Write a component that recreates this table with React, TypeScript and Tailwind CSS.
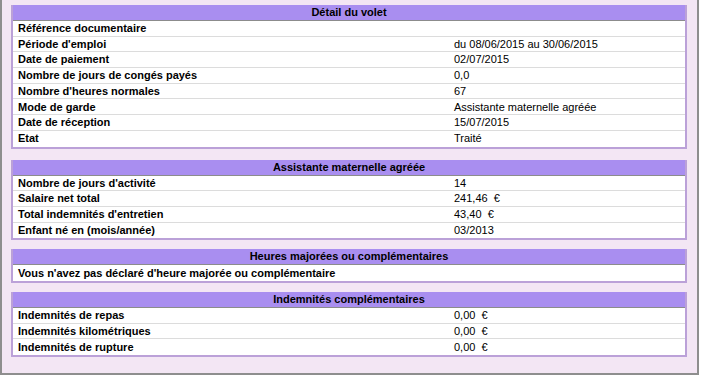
const font = { fontFamily: '"Liberation Sans", Arial, sans-serif' };

type Row = [string, string];

const volet: Row[] = [
  ["Référence documentaire", ""],
  ["Période d'emploi", "du 08/06/2015 au 30/06/2015"],
  ["Date de paiement", "02/07/2015"],
  ["Nombre de jours de congés payés", "0,0"],
  ["Nombre d'heures normales", "67"],
  ["Mode de garde", "Assistante maternelle agréée"],
  ["Date de réception", "15/07/2015"],
  ["Etat", "Traité"],
];

const assistante: Row[] = [
  ["Nombre de jours d'activité", "14"],
  ["Salaire net total", "241,46\u00a0 €"],
  ["Total indemnités d'entretien", "43,40\u00a0 €"],
  ["Enfant né en (mois/année)", "03/2013"],
];

const indemnites: Row[] = [
  ["Indemnités de repas", "0,00\u00a0 €"],
  ["Indemnités kilométriques", "0,00\u00a0 €"],
  ["Indemnités de rupture", "0,00\u00a0 €"],
];

function Panel({ title, children }: { title: string; children: React.ReactNode }) {
  return (
    <div className="border-2 border-t-0 border-[#bba1d8] bg-white">
      <div className="h-[16px] bg-[#a98ef0] border-b border-[#8c8c8c] text-center text-[11px] leading-[15px] font-bold text-black">
        {title}
      </div>
      {children}
    </div>
  );
}

function Rows({ rows }: { rows: Row[] }) {
  return (
    <div>
      {rows.map(([label, value], i) => (
        <div
          key={label}
          className={`flex h-[15.7px] items-center text-[11px] text-black ${
            i < rows.length - 1 ? "border-b border-[#dcdcdc]" : ""
          }`}
        >
          <div className="w-[441px] pl-[5px] font-bold">{label}</div>
          <div className="flex-1">{value}</div>
        </div>
      ))}
    </div>
  );
}

export default function App() {
  return (
    <div className="w-[701px] h-[375px] bg-white" style={font}>
      <div className="w-[699px] h-[375px] bg-[#f3e6f4] border-l-2 border-r-2 border-b-2 border-[#8e8e8e] pt-[5px] pl-[9px] pr-[10px] flex flex-col">
        <Panel title="Détail du volet">
          <Rows rows={volet} />
        </Panel>
        <div className="h-[11px]" />
        <Panel title="Assistante maternelle agréée">
          <Rows rows={assistante} />
        </Panel>
        <div className="h-[9px]" />
        <Panel title="Heures majorées ou complémentaires">
          <div className="h-[15.7px] flex items-center pl-[5px] text-[11px] font-bold text-black">
            Vous n'avez pas déclaré d'heure majorée ou complémentaire
          </div>
        </Panel>
        <div className="h-[9px]" />
        <Panel title="Indemnités complémentaires">
          <Rows rows={indemnites} />
        </Panel>
      </div>
    </div>
  );
}
